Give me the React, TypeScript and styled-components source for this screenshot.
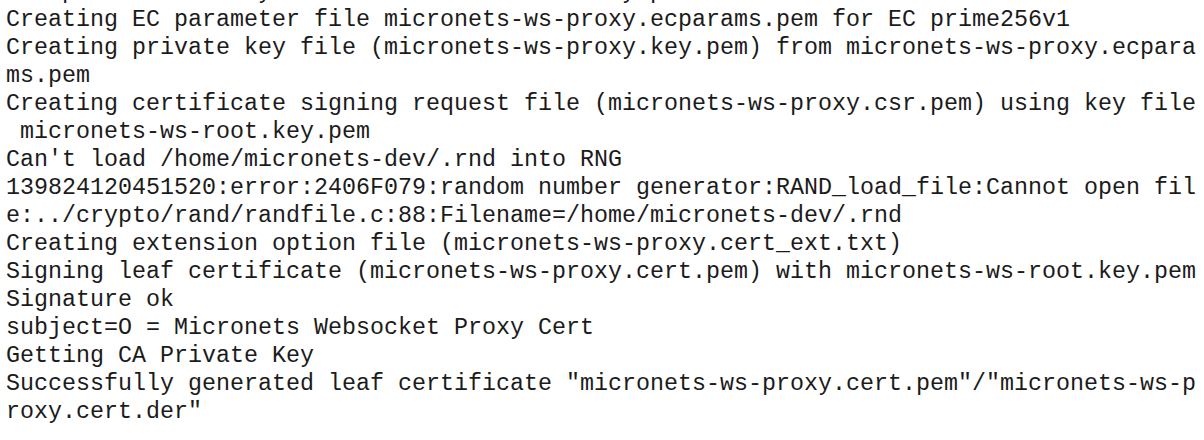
import React from "react";
import styled, { createGlobalStyle } from "styled-components";

const Global = createGlobalStyle`
  html, body {
    margin: 0;
    padding: 0;
    background: #ffffff;
    overflow: hidden;
  }
`;

const Screen = styled.div`
  width: 1204px;
  height: 440px;
  overflow: hidden;
  background: #ffffff;
`;

const Output = styled.div`
  display: flex;
  flex-direction: column;
  margin-top: -22px;
  padding-left: 6px;
  font-family: "Liberation Mono", "DejaVu Sans Mono", monospace;
  font-size: 23.33px;
  line-height: 28px;
  color: #1b1b1b;
`;

const Line = styled.div`
  white-space: pre;
  height: 28px;
`;

const lines = [
  "Use private ECC key for micronets-ws-root.key.pem",
  "Creating EC parameter file micronets-ws-proxy.ecparams.pem for EC prime256v1",
  "Creating private key file (micronets-ws-proxy.key.pem) from micronets-ws-proxy.ecpara",
  "ms.pem",
  "Creating certificate signing request file (micronets-ws-proxy.csr.pem) using key file",
  " micronets-ws-root.key.pem",
  "Can't load /home/micronets-dev/.rnd into RNG",
  "139824120451520:error:2406F079:random number generator:RAND_load_file:Cannot open fil",
  "e:../crypto/rand/randfile.c:88:Filename=/home/micronets-dev/.rnd",
  "Creating extension option file (micronets-ws-proxy.cert_ext.txt)",
  "Signing leaf certificate (micronets-ws-proxy.cert.pem) with micronets-ws-root.key.pem",
  "Signature ok",
  "subject=O = Micronets Websocket Proxy Cert",
  "Getting CA Private Key",
  'Successfully generated leaf certificate "micronets-ws-proxy.cert.pem"/"micronets-ws-p',
  'roxy.cert.der"',
];

export default function App() {
  return (
    <>
      <Global />
      <Screen>
        <Output>
          {lines.map((l, i) => (
            <Line key={i}>{l}</Line>
          ))}
        </Output>
      </Screen>
    </>
  );
}
